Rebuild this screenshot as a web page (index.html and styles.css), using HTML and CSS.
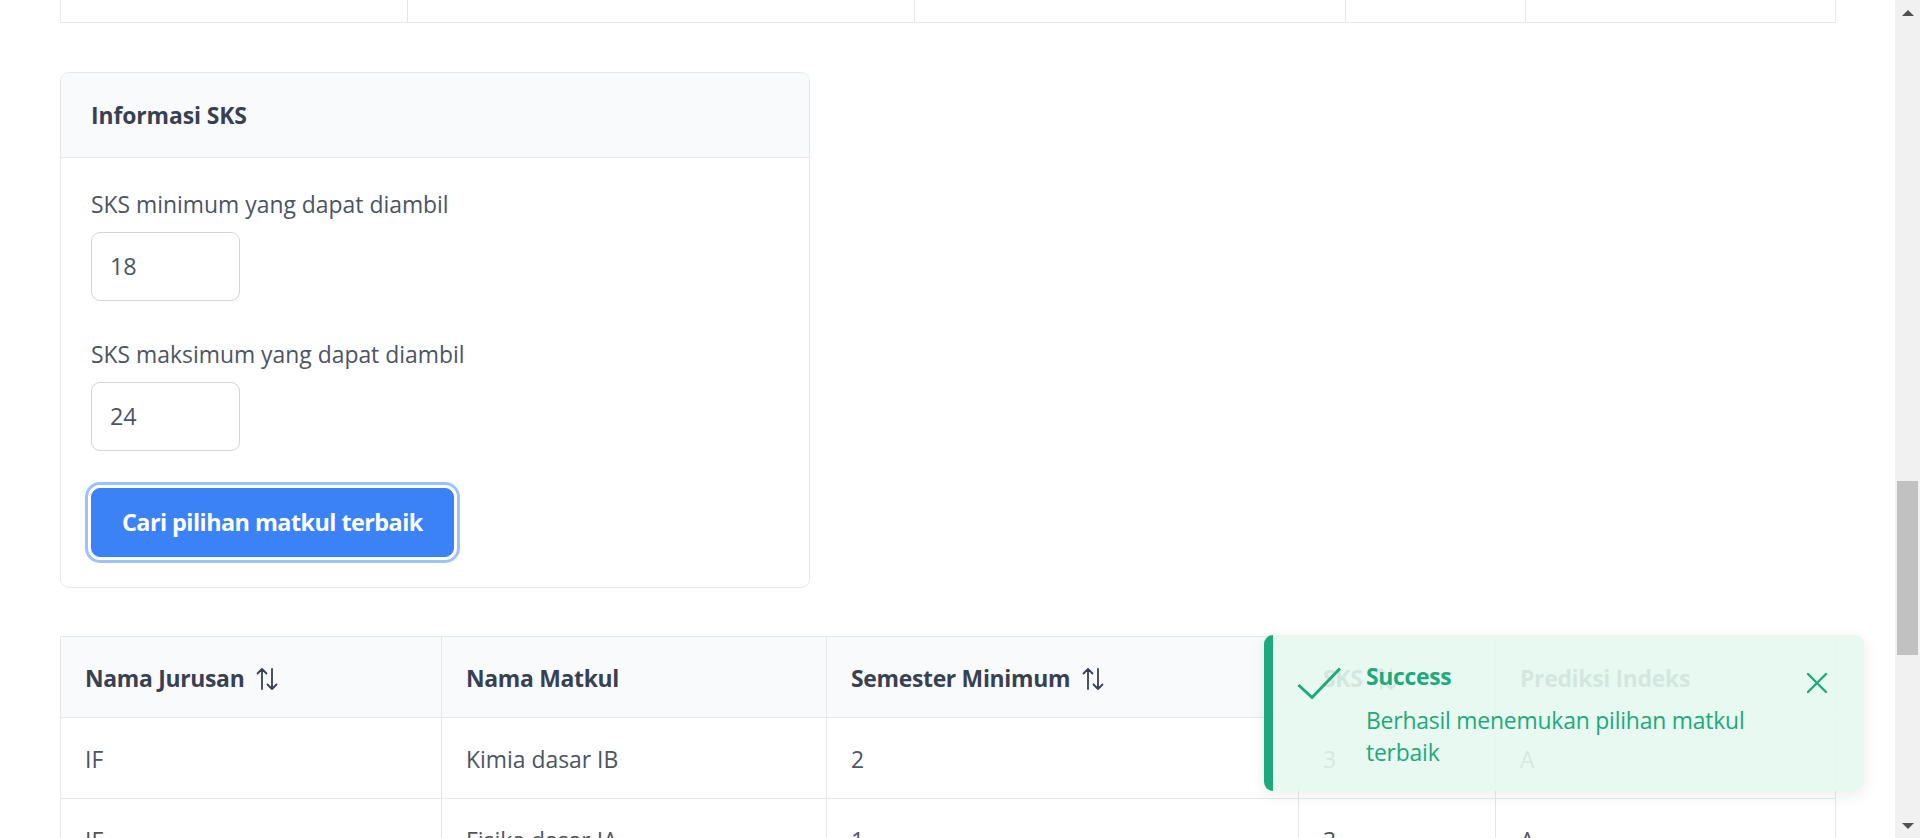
FILE: index.html
```html
<!DOCTYPE html>
<html lang="id">
<head>
<meta charset="utf-8">
<title>Informasi SKS</title>
<link rel="stylesheet" href="styles.css">
</head>
<body>
<div class="screen">
  <main class="page">
    <table class="grid grid-top">
      <colgroup>
        <col class="t1"><col class="t2"><col class="t3"><col class="t4"><col class="t5">
      </colgroup>
      <tbody>
        <tr class="tail-row"><td></td><td></td><td></td><td></td><td></td></tr>
      </tbody>
    </table>

    <section class="card">
      <header class="card-header">Informasi SKS</header>
      <div class="card-body">
        <div class="field">
          <label class="field-label" for="min">SKS minimum yang dapat diambil</label>
          <input class="field-input" id="min" type="text" value="18">
        </div>
        <div class="field">
          <label class="field-label" for="max">SKS maksimum yang dapat diambil</label>
          <input class="field-input" id="max" type="text" value="24">
        </div>
        <button class="btn-primary" type="button">Cari pilihan matkul terbaik</button>
      </div>
    </section>

    <table class="grid grid-result">
      <colgroup>
        <col class="r1"><col class="r2"><col class="r3"><col class="r4"><col class="r5">
      </colgroup>
      <thead>
        <tr>
          <th><span class="th-inner">Nama Jurusan<svg class="sort-icon" viewBox="0 0 22 26" width="22" height="26"><path d="M6 23V3M1.5 7.5L6 3l4.5 4.5M16 3v20M11.5 18.5L16 23l4.5-4.5" fill="none" stroke="currentColor" stroke-width="1.8" stroke-linecap="round" stroke-linejoin="round"/></svg></span></th>
          <th><span class="th-inner">Nama Matkul</span></th>
          <th><span class="th-inner">Semester Minimum<svg class="sort-icon" viewBox="0 0 22 26" width="22" height="26"><path d="M6 23V3M1.5 7.5L6 3l4.5 4.5M16 3v20M11.5 18.5L16 23l4.5-4.5" fill="none" stroke="currentColor" stroke-width="1.8" stroke-linecap="round" stroke-linejoin="round"/></svg></span></th>
          <th><span class="th-inner">SKS<svg class="sort-icon" viewBox="0 0 22 26" width="22" height="26"><path d="M6 23V3M1.5 7.5L6 3l4.5 4.5M16 3v20M11.5 18.5L16 23l4.5-4.5" fill="none" stroke="currentColor" stroke-width="1.8" stroke-linecap="round" stroke-linejoin="round"/></svg></span></th>
          <th><span class="th-inner">Prediksi Indeks</span></th>
        </tr>
      </thead>
      <tbody>
        <tr><td>IF</td><td>Kimia dasar IB</td><td>2</td><td>3</td><td>A</td></tr>
        <tr><td>IF</td><td>Fisika dasar IA</td><td>1</td><td>3</td><td>A</td></tr>
      </tbody>
    </table>

    <div class="toast" role="alert">
      <svg class="toast-icon" viewBox="0 0 45 48" width="45" height="48"><path d="M1.5 26L15 38.5 43 9.5" fill="none" stroke="currentColor" stroke-width="3" stroke-linejoin="miter"/></svg>
      <div class="toast-text">
        <div class="toast-summary">Success</div>
        <div class="toast-detail">Berhasil menemukan pilihan matkul terbaik</div>
      </div>
      <button class="toast-close" type="button" aria-label="Tutup">
        <svg viewBox="0 0 48 48" width="48" height="48"><path d="M16 15l18 18M34 15L16 33" fill="none" stroke="currentColor" stroke-width="2.4" stroke-linecap="round"/></svg>
      </button>
    </div>
  </main>

  <div class="scrollbar" aria-hidden="true">
    <div class="sb-btn"><span class="sb-arrow sb-up"></span></div>
    <div class="sb-track">
      <div class="sb-thumb"></div>
    </div>
    <div class="sb-btn"><span class="sb-arrow sb-down"></span></div>
  </div>
</div>
</body>
</html>
```
FILE: styles.css
```css
* { box-sizing: border-box; }

html, body {
  margin: 0;
  padding: 0;
  background: #ffffff;
}

body {
  font-family: "Open Sans", "Noto Sans", sans-serif;
  font-size: 22.9px;
  color: #4b5563;
}

.screen {
  display: flex;
  width: 1920px;
  height: 838px;
  overflow: hidden;
}

.page {
  flex: 1;
  position: relative;
  overflow: hidden;
  padding: 0 60px;
}

/* tables */
.grid {
  width: 100%;
  border-collapse: collapse;
  table-layout: fixed;
}

.grid td, .grid th {
  border: 1px solid #e5e7eb;
  text-align: left;
  padding: 26px 24px 22px;
  line-height: 32px;
  white-space: nowrap;
  overflow: hidden;
}

.grid-top .t1 { width: 347px; }
.grid-top .t2 { width: 507px; }
.grid-top .t3 { width: 431px; }
.grid-top .t4 { width: 180px; }
.grid-top .t5 { width: 310px; }

.grid-top td {
  border-top: none;
  padding: 0;
  height: 22px;
}

.grid-result { margin-top: 48px; }
.grid-result .r1 { width: 381px; }
.grid-result .r2 { width: 385px; }
.grid-result .r3 { width: 472px; }
.grid-result .r4 { width: 197px; }
.grid-result .r5 { width: 340px; }

.grid-result th {
  background: #f9fafb;
  color: #374151;
  font-weight: 700;
  letter-spacing: -0.3px;
}

.grid-result td { color: #4b5563; }

.th-inner {
  display: inline-flex;
  align-items: center;
}

.sort-icon {
  margin-left: 12px;
  color: #374151;
}

/* card */
.card {
  width: 750px;
  margin-top: 49px;
  border: 1px solid #e5e7eb;
  border-radius: 9px;
  background: #ffffff;
  overflow: hidden;
}

.card-header {
  background: #f9fafb;
  border-bottom: 1px solid #e5e7eb;
  padding: 30px 30px 28px;
  line-height: 26px;
  font-weight: 700;
  letter-spacing: -0.1px;
  color: #374151;
}

.card-body {
  padding: 30px 30px 30px;
  display: flex;
  flex-direction: column;
  align-items: flex-start;
}

.field {
  display: flex;
  flex-direction: column;
  align-items: flex-start;
  margin-bottom: 37px;
}

.field-label {
  line-height: 34px;
  margin-bottom: 10px;
  color: #4b5563;
}

.field-input {
  width: 149px;
  height: 69px;
  padding: 0 18px;
  font-family: inherit;
  font-size: 23.4px;
  color: #4b5563;
  border: 1px solid #d1d5db;
  border-radius: 9px;
  background: #ffffff;
  outline: none;
}

.btn-primary {
  height: 69px;
  padding: 0 30px;
  font-family: inherit;
  font-size: 23.4px;
  font-weight: 700;
  letter-spacing: -0.55px;
  color: #ffffff;
  background: #3b82f6;
  border: 1px solid #3b82f6;
  border-radius: 9px;
  box-shadow: 0 0 0 3px #ffffff, 0 0 0 6px #9dc1fb, 0 1px 2px 0 rgba(0, 0, 0, 0.3);
  cursor: pointer;
}

/* toast */
.toast {
  position: absolute;
  top: 635px;
  right: 31px;
  width: 600px;
  display: flex;
  align-items: flex-start;
  padding: 26px 24px 22px;
  background: rgba(228, 248, 240, 0.9);
  border-left: 9px solid #1ea97c;
  border-radius: 9px;
  color: #1ea97c;
  box-shadow: 0 4px 14px 2px rgba(0, 0, 0, 0.06);
}

.toast-icon {
  flex: none;
  display: block;
  margin-top: -2px;
}

.toast-text {
  flex: 1;
  margin-left: 24px;
  line-height: 32px;
}

.toast-summary {
  font-weight: 700;
  letter-spacing: -0.3px;
}

.toast-detail {
  margin-top: 12px;
  letter-spacing: -0.2px;
}

.toast-close {
  flex: none;
  width: 48px;
  height: 48px;
  margin-top: -2px;
  padding: 0;
  border: none;
  background: transparent;
  color: #1ea97c;
  border-radius: 50%;
}

.toast-close svg { display: block; }

/* fake browser scrollbar */
.scrollbar {
  flex: none;
  width: 25px;
  height: 838px;
  background: #f1f1f1;
  display: flex;
  flex-direction: column;
}

.sb-btn {
  flex: none;
  height: 25px;
  display: flex;
  align-items: center;
  justify-content: center;
}

.sb-arrow {
  width: 0;
  height: 0;
  border-left: 6px solid transparent;
  border-right: 6px solid transparent;
}

.sb-up { border-bottom: 6px solid #505050; }
.sb-down { border-top: 6px solid #505050; }

.sb-track {
  flex: 1;
  padding: 456px 2px 0;
}

.sb-thumb {
  height: 174px;
  background: #c1c1c1;
}
```
